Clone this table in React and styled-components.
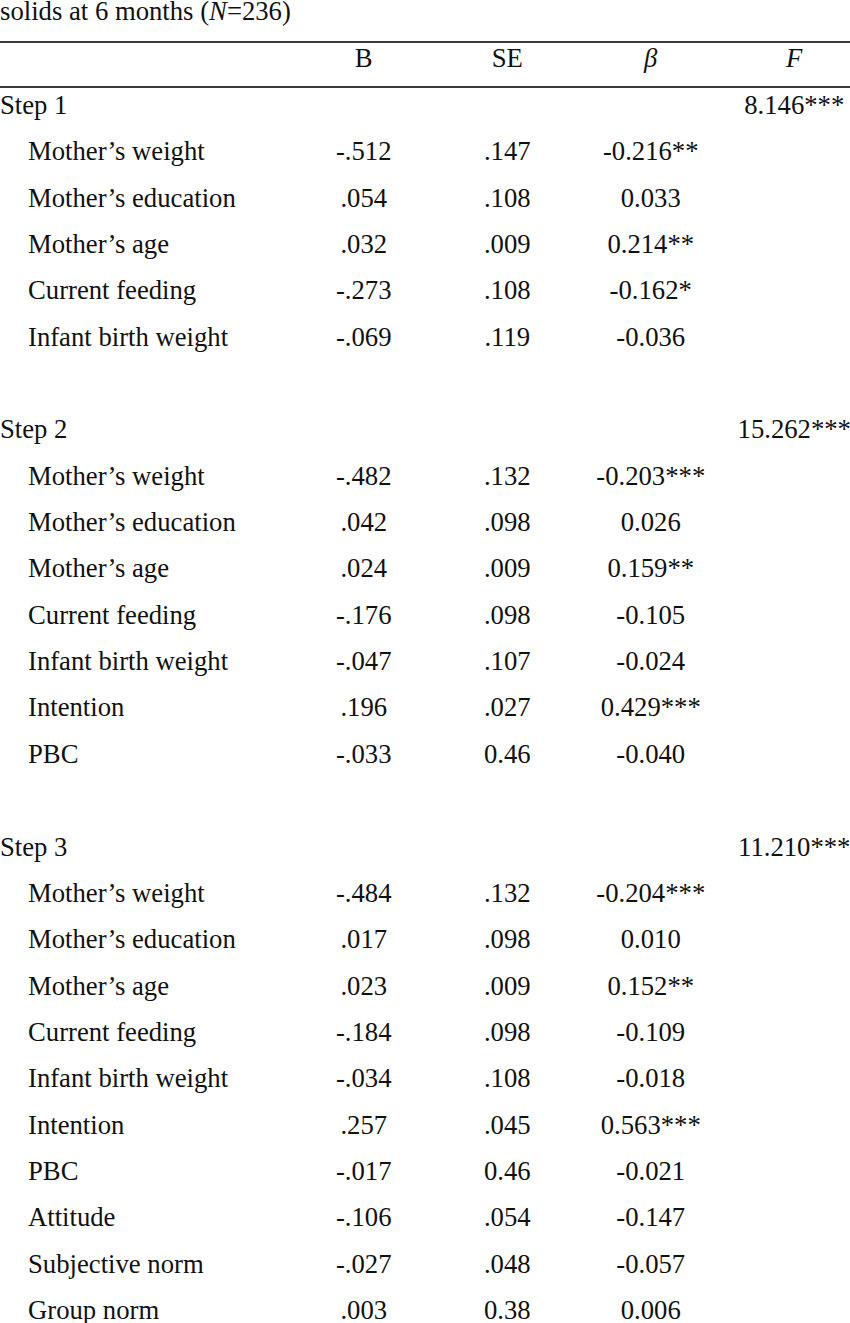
import React from "react";
import styled, { createGlobalStyle } from "styled-components";

const GlobalStyle = createGlobalStyle`
  html, body {
    margin: 0;
    padding: 0;
    background: #ffffff;
  }
  body {
    font-family: "Liberation Serif", "Times New Roman", serif;
    font-size: 26.7px;
    color: #111;
    overflow: hidden;
  }
`;

const Page = styled.div`
  width: 850px;
  overflow: hidden;
`;

const Caption = styled.div`
  line-height: 22px;
  height: 22px;
  margin-bottom: 19px;
  white-space: nowrap;
`;

const Rule = styled.div`
  height: 2px;
  background: #3a3a3a;
  width: 850px;
`;

const Row = styled.div`
  display: grid;
  grid-template-columns: 292px repeat(4, 143.5px);
  line-height: ${(p) => (p.$head ? "30px" : "34px")};
  padding-bottom: ${(p) => (p.$head ? "13px" : "12.35px")};
  white-space: nowrap;
`;

const Spacer = styled.div`
  height: 46.35px;
`;

const Label = styled.div`
  padding-left: ${(p) => (p.$indent ? "28px" : "0")};
`;

const Cell = styled.div`
  text-align: center;
  font-style: ${(p) => (p.$italic ? "italic" : "normal")};
`;

const steps = [
  {
    name: "Step 1",
    f: "8.146***",
    rows: [
      ["Mother\u2019s weight", "-.512", ".147", "-0.216**"],
      ["Mother\u2019s education", ".054", ".108", "0.033"],
      ["Mother\u2019s age", ".032", ".009", "0.214**"],
      ["Current feeding", "-.273", ".108", "-0.162*"],
      ["Infant birth weight", "-.069", ".119", "-0.036"],
    ],
  },
  {
    name: "Step 2",
    f: "15.262***",
    rows: [
      ["Mother\u2019s weight", "-.482", ".132", "-0.203***"],
      ["Mother\u2019s education", ".042", ".098", "0.026"],
      ["Mother\u2019s age", ".024", ".009", "0.159**"],
      ["Current feeding", "-.176", ".098", "-0.105"],
      ["Infant birth weight", "-.047", ".107", "-0.024"],
      ["Intention", ".196", ".027", "0.429***"],
      ["PBC", "-.033", "0.46", "-0.040"],
    ],
  },
  {
    name: "Step 3",
    f: "11.210***",
    rows: [
      ["Mother\u2019s weight", "-.484", ".132", "-0.204***"],
      ["Mother\u2019s education", ".017", ".098", "0.010"],
      ["Mother\u2019s age", ".023", ".009", "0.152**"],
      ["Current feeding", "-.184", ".098", "-0.109"],
      ["Infant birth weight", "-.034", ".108", "-0.018"],
      ["Intention", ".257", ".045", "0.563***"],
      ["PBC", "-.017", "0.46", "-0.021"],
      ["Attitude", "-.106", ".054", "-0.147"],
      ["Subjective norm", "-.027", ".048", "-0.057"],
      ["Group norm", ".003", "0.38", "0.006"],
    ],
  },
];

export default function App() {
  return (
    <Page>
      <GlobalStyle />
      <Caption>
        solids at 6 months (<i>N</i>=236)
      </Caption>
      <Rule />
      <Row $head>
        <Label />
        <Cell>B</Cell>
        <Cell>SE</Cell>
        <Cell $italic>β</Cell>
        <Cell $italic>F</Cell>
      </Row>
      <Rule />
      {steps.map((step, i) => (
        <React.Fragment key={step.name}>
          {i > 0 && <Spacer />}
          <Row>
            <Label>{step.name}</Label>
            <Cell />
            <Cell />
            <Cell />
            <Cell>{step.f}</Cell>
          </Row>
          {step.rows.map((r) => (
            <Row key={r[0]}>
              <Label $indent>{r[0]}</Label>
              <Cell>{r[1]}</Cell>
              <Cell>{r[2]}</Cell>
              <Cell>{r[3]}</Cell>
              <Cell />
            </Row>
          ))}
        </React.Fragment>
      ))}
    </Page>
  );
}
